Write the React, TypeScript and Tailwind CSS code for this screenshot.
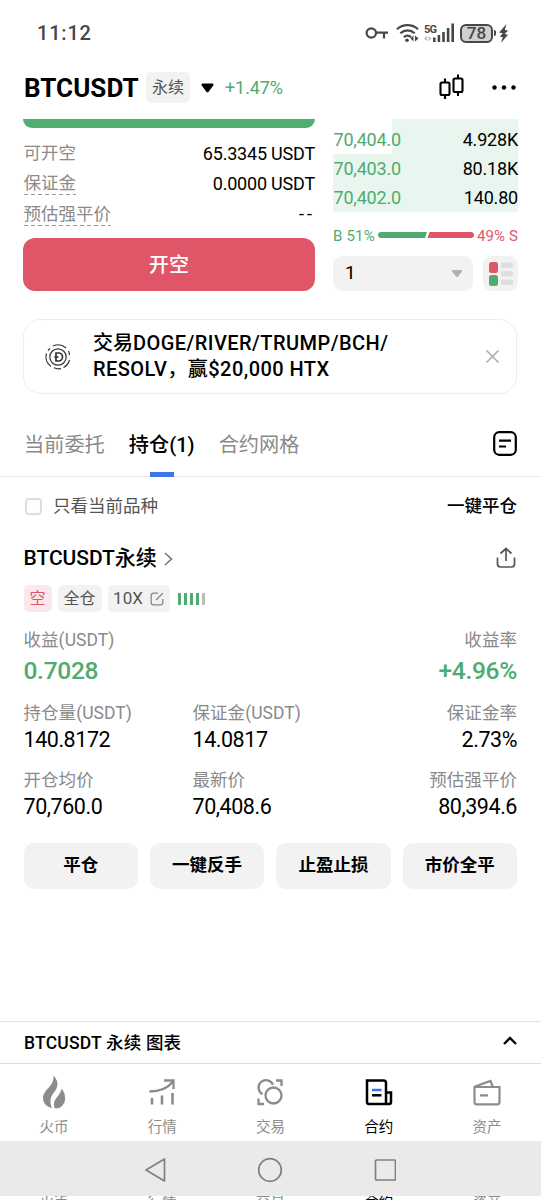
import type { ReactNode } from 'react'

const bids = [
  { price: '70,404.0', amount: '4.928K' },
  { price: '70,403.0', amount: '80.18K' },
  { price: '70,402.0', amount: '140.80' },
]

const actions = ['平仓', '一键反手', '止盈止损', '市价全平']

function StatusBar() {
  return (
    <div className="flex h-14 items-center justify-between pt-[10px] pr-[32px] pl-[37px] text-[#474747]">
      <span className="text-[20px] font-medium tracking-[0.8px]">11:12</span>
      <div className="flex items-center">
        <svg className="mr-[2px]" width="24" height="16" viewBox="0 0 24 16" fill="none" stroke="currentColor" strokeWidth="2.2">
          <circle cx="6.3" cy="8" r="4.7" />
          <path d="M11 7.6h12M19 8v5.4" />
        </svg>
        <svg className="ml-[5px]" width="24" height="20" viewBox="0 0 24 20" fill="none" stroke="currentColor" strokeWidth="2.2">
          <path d="M1 6.2c6-5.4 15-5.4 21 0" />
          <path d="M4.3 10.3c4.2-3.8 10.2-3.8 14.4 0" />
          <path d="M7.8 14.2c2.2-2 5-2 7.4 0" />
          <circle cx="11" cy="17.2" r="1.8" fill="currentColor" stroke="none" />
          <path d="M14.5 15.5l3-3v6zM19 12.5l3.5 3-3.5 3z" fill="currentColor" stroke="none" />
        </svg>
        <svg className="ml-[4px]" width="32" height="20" viewBox="0 0 32 20" fill="currentColor">
          <text x="0" y="9.5" fontSize="11" fontWeight="700" textLength="13">5G</text>
          <path d="M0 15.500l3-2.800v5.600zM4.500 12.700l3 2.800-3 2.800z" opacity=".35" />
          <path d="M9 14.500h2.600V19H9zM13.600 12h2.600v7h-2.600zM18.200 9h2.600v10h-2.600zM22.800 5h2.600v14h-2.600zM27.400.5H30V19h-2.600z" />
        </svg>
        <div className="ml-[4px] flex h-[19px] w-[33px] items-center justify-center rounded-[6px] border-2 border-[#474747] bg-[#d0d0d0] text-[17px] leading-[15px] font-medium">
          78
        </div>
        <div className="ml-[1px] h-[6px] w-[2px] rounded-r bg-[#474747]" />
        <svg className="ml-[3px]" width="10" height="19" viewBox="0 0 10 19" fill="currentColor">
          <path d="M7.500 0L0 8.500l3.800.8L.8 12.500l3 .7L2 19l7-8.200-3.400-.9L9 6.700 5.800 5.800z" />
        </svg>
      </div>
    </div>
  )
}

function Header() {
  return (
    <div className="flex h-[63px] items-center pr-[24px] pl-[24px]">
      <h1 className="w-[116px] pt-px text-[26px] font-bold tracking-[0.05px] whitespace-nowrap">BTCUSDT</h1>
      <span className="ml-[6px] flex h-[31px] w-[44px] items-center justify-center rounded-[5px] bg-[#f2f2f2] text-[16px] text-[#555]">
        永续
      </span>
      <svg className="ml-[11px]" width="13" height="10" viewBox="0 0 13 10">
        <path d="M1.800.5h9.400c1.400 0 1.800 1.300.9 2.300L7.600 8.700c-.6.8-1.600.8-2.200 0L.9 2.800C0 1.800.4.5 1.800.5z" />
      </svg>
      <span className="ml-[11px] text-[18px] tracking-[-0.1px] text-[#4fab6f]">+1.47%</span>
      <svg className="mb-[2px] ml-auto" width="26" height="26" viewBox="0 0 26 26" fill="none" stroke="black" strokeWidth="2.1">
        <rect x="1.500" y="8.500" width="9" height="12.500" rx="1.500" />
        <path d="M6 4.500v4M6 21v4M19 .5v4M19 18v4" />
        <rect x="14.500" y="4.500" width="9" height="13.500" rx="1.500" />
      </svg>
      <svg className="ml-[26px]" width="26" height="6" viewBox="0 0 26 6">
        <circle cx="3.500" cy="2.500" r="2.200" />
        <circle cx="13" cy="2.500" r="2.200" />
        <circle cx="22.500" cy="2.500" r="2.200" />
      </svg>
    </div>
  )
}

function InfoRow({ label, value, dashed }: { label: string; value: string; dashed?: boolean }) {
  return (
    <div className="flex h-[30.3px] items-center justify-between">
      <span className="relative text-[17.500px] leading-[24px] text-[#8a8a8a]">
        {label}
        {dashed && (
          <svg className="absolute bottom-0 left-0 h-px w-full">
            <line x1="0" y1="0.500" x2="100%" y2="0.500" stroke="#999" strokeDasharray="4 3" />
          </svg>
        )}
      </span>
      <span className={value === '--' ? 'text-[18px] tracking-[3px]' : 'text-[18px] tracking-[-0.2px]'}>{value}</span>
    </div>
  )
}

function OrderForm() {
  return (
    <div className="w-[292px]">
      <div className="h-[9px] overflow-hidden rounded-b-[12px] bg-[#51ad70]" />
      <div className="h-[110px] pt-[10px] pl-[0.5px]">
        <InfoRow label="可开空" value="65.3345 USDT" />
        <InfoRow label="保证金" value="0.0000 USDT" dashed />
        <InfoRow label="预估强平价" value="--" dashed />
      </div>
      <button className="flex h-[53px] w-full items-center justify-center rounded-[12px] bg-[#df5668] text-[20px] font-medium text-white">
        开空
      </button>
    </div>
  )
}

function OrderBook() {
  return (
    <div className="w-[185px]">
      <div className="relative h-[93px] bg-[#e9f6ef] pt-[6px]">
        {/* first level is only partly filled */}
        <div className="absolute top-0 left-0 h-[35px] w-[59px] bg-white" />
        {bids.map((row) => (
          <div key={row.price} className="relative flex h-[29.2px] items-center justify-between text-[18px] tracking-[-0.2px]">
            <span className="pl-[0.5px] text-[#4fab6f]">{row.price}</span>
            <span>{row.amount}</span>
          </div>
        ))}
      </div>
      <div className="mt-[13px] flex h-[22px] items-center justify-between text-[15px] whitespace-nowrap">
        <span className="tracking-[0.2px] text-[#4fab6f]">B 51%</span>
        <svg className="mb-[2px]" width="96" height="6" viewBox="0 0 96 6">
          <path d="M3 0h46l-2 6H3a3 3 0 0 1 0-6z" fill="#4fab6f" />
          <path d="M51.500 0H93a3 3 0 0 1 0 6H49.500z" fill="#df5668" />
        </svg>
        <span className="tracking-[0.1px] text-[#df5668]">49% S</span>
      </div>
      <div className="mt-[9px] flex justify-between">
        <div className="flex h-[35px] w-[140px] items-center justify-between rounded-[9px] bg-[#f2f2f2] pr-[11px] pl-[12px] text-[19px]">
          <span>1</span>
          <svg width="10" height="7" viewBox="0 0 10 7" fill="#b0b0b0">
            <path d="M1.200 0h7.600c1.200 0 1.500 1 .8 1.900L5.900 6.400c-.5.700-1.300.700-1.800 0L.4 1.900C-.3 1 0 0 1.200 0z" />
          </svg>
        </div>
        <div className="flex h-[35px] w-[35px] items-center justify-center rounded-[9px] bg-[#f2f2f2]">
          <svg width="24" height="24" viewBox="0 0 24 24">
            <rect width="9" height="11" rx="2.500" fill="#df5668" />
            <rect y="13" width="9" height="11" rx="2.500" fill="#4fab6f" />
            <g fill="#dedede">
              <rect x="12" y=".5" width="12" height="5.500" rx="1.500" />
              <rect x="12" y="9" width="12" height="5.500" rx="1.500" />
              <rect x="12" y="17.500" width="12" height="5.500" rx="1.500" />
            </g>
          </svg>
        </div>
      </div>
    </div>
  )
}

function Banner() {
  return (
    <div className="mr-[24px] ml-[23px] mt-[28px] flex h-[75px] items-center rounded-[18px] border border-[#ededed] pr-[17px] pl-[21px]">
      <svg width="26" height="26" viewBox="0 0 26 26" fill="none" stroke="#333" strokeWidth="1.200">
        <circle cx="13" cy="13" r="8.200" />
        <path d="M8 2a12 12 0 0 1 13 2M23.500 7a12 12 0 0 1 1 4M24.500 16a12 12 0 0 1-6 7.500M16 24.600a12 12 0 0 1-7-.8M6 22.500a12 12 0 0 1-4.500-13M3 6.500L5 4.300" />
        <path d="M11 9h2.500a4 4 0 0 1 0 8H11zM9.300 13h4.200" strokeWidth="1.700" />
      </svg>
      <p className="ml-[22px] w-[340px] text-[20px] leading-[25.500px] font-medium tracking-[0.45px] whitespace-nowrap">
        <span className="tracking-normal">交易</span>DOGE/RIVER/TRUMP/BCH/
        <br />
        RESOLV，赢$20,000 HTX
      </p>
      <svg className="ml-auto" width="13" height="13" viewBox="0 0 13 13" stroke="#aaa" strokeWidth="1.500">
        <path d="M.5.5l12 12M12.500.5l-12 12" />
      </svg>
    </div>
  )
}

function Tabs() {
  return (
    <div className="mt-[29px] flex h-[54px] justify-between border-b border-[#ececec] px-[24px] text-[20.200px] text-[#8a8a8a]">
      <div className="flex gap-[24px]">
        <span className="pt-[7px]">当前委托</span>
        <span className="relative pt-[7px] font-medium text-black">
          持仓(1)
          <i className="absolute -bottom-px left-1/2 h-[5px] w-[24px] -translate-x-1/2 bg-[#3b78ec]" />
        </span>
        <span className="pt-[7px]">合约网格</span>
      </div>
      <svg className="mt-[8px]" width="24" height="25" viewBox="0 0 24 25" fill="none" stroke="black" strokeWidth="2.200">
        <rect x="1.200" y="1.200" width="21.600" height="22.600" rx="5" />
        <path d="M6 9.700h12M6 15.500h7" />
      </svg>
    </div>
  )
}

function Stat({ label, value, right, green }: { label: string; value: string; right?: boolean; green?: boolean }) {
  return (
    <div className={right ? 'text-right' : ''}>
      <div className="text-[17.500px] leading-[26px] tracking-[0.05px] whitespace-nowrap text-[#8a8a8a]">{label}</div>
      {green ? (
        <div className="pt-px text-[24.500px] leading-[33px] font-medium tracking-[-0.3px] text-[#4fab6f]">{value}</div>
      ) : (
        <div className="text-[21.500px] leading-[28px] tracking-[-0.45px]">{value}</div>
      )}
    </div>
  )
}

function Position() {
  return (
    <div className="pr-[24px] pl-[23.500px]">
      <div className="flex h-[59px] items-center">
        <div className="ml-[1.500px] h-[17px] w-[17px] rounded-[4px] border-2 border-[#dedede]" />
        <span className="ml-[11px] text-[17.500px] text-[#555]">只看当前品种</span>
        <span className="ml-auto text-[17.500px] font-medium">一键平仓</span>
      </div>
      <div className="flex h-[46px] items-center">
        <span className="text-[21px] font-medium tracking-[-0.05px]">BTCUSDT永续</span>
        <svg className="ml-[7px]" width="9" height="14" viewBox="0 0 9 14" fill="none" stroke="#777" strokeWidth="1.600">
          <path d="M1 1l6.500 6L1 13" />
        </svg>
        <svg className="mb-[3px] mr-[1px] ml-auto" width="20" height="21" viewBox="0 0 20 21" fill="none" stroke="#555" strokeWidth="1.700">
          <path d="M1.500 10.500v6.500c0 2 1 3 3 3h11c2 0 3-1 3-3v-6.500M10 14V2M4.500 6.500L10 1.500l5.500 5" />
        </svg>
      </div>
      <div className="mt-[3px] flex h-[27px] gap-[6px] text-[16px] text-[#555]">
        <span className="flex w-[28px] items-center justify-center rounded-[5px] bg-[#fce8ec] text-[#df5668]">空</span>
        <span className="flex w-[44px] items-center justify-center rounded-[5px] bg-[#f2f2f2]">全仓</span>
        <span className="flex w-[62px] items-center justify-center gap-[7px] rounded-[5px] bg-[#f2f2f2] text-[17px]">
          10X
          <svg width="14" height="14" viewBox="0 0 14 14" fill="none" stroke="#888" strokeWidth="1.300">
            <path d="M8 1.200H3.500c-1.500 0-2.300.8-2.300 2.300v7c0 1.500.8 2.300 2.300 2.300h7c1.500 0 2.300-.8 2.300-2.300V7M6 8l6.800-6.800" />
          </svg>
        </span>
        <div className="ml-[2px] flex items-center gap-[3px]">
          {[0, 1, 2, 3].map((i) => (
            <i key={i} className="h-[12px] w-[3px] bg-[#4fab6f]" />
          ))}
          <i className="h-[12px] w-[3px] bg-[#bbb]" />
        </div>
      </div>
      <div className="mt-[15px] flex h-[73px] justify-between">
        <Stat label="收益(USDT)" value="0.7028" green />
        <Stat label="收益率" value="+4.96%" green right />
      </div>
      <div className="grid grid-cols-[169px_169px_1fr] gap-y-[13px]">
        <Stat label="持仓量(USDT)" value="140.8172" />
        <Stat label="保证金(USDT)" value="14.0817" />
        <Stat label="保证金率" value="2.73%" right />
        <Stat label="开仓均价" value="70,760.0" />
        <Stat label="最新价" value="70,408.6" />
        <Stat label="预估强平价" value="80,394.6" right />
      </div>
      <div className="mt-[22px] grid grid-cols-4 gap-[12px]">
        {actions.map((name) => (
          <button key={name} className="h-[46px] rounded-[10px] bg-[#f2f2f2] pb-px text-[17.500px] font-bold">
            {name}
          </button>
        ))}
      </div>
    </div>
  )
}

function FlameIcon() {
  return (
    <svg width="24" height="34" viewBox="0 0 24 34" fill="#8c8c8c">
      <path d="M11.500.5c4.500 5 5 9.500 2.500 14-2.500 4-5.500 6.500-5.500 11.500 0 3 .5 5 1.500 7C4.500 32 1 28 1 23 1 14.500 12.500 11.500 11.500.5z" />
      <path d="M19.500 13.500c5 6 5.500 15.500-2.500 19.500-1.500.5-3 .5-4.500 0-3-9 6-11.500 7-19.500z" />
    </svg>
  )
}

function MarketIcon() {
  return (
    <svg width="28" height="28" viewBox="0 0 28 28" fill="none" stroke="#8c8c8c" strokeWidth="2.300">
      <path d="M1.500 13.500C12 13.500 19 11 24.500 4M16 2.500h9.500V11" />
      <path d="M4 20v6.500M14 17.500v9M24.500 15v11.500" strokeWidth="2.600" />
    </svg>
  )
}

function TradeIcon() {
  return (
    <svg width="28" height="28" viewBox="0 0 28 28" fill="none" stroke="#8c8c8c" strokeWidth="2.300">
      <path d="M6.500 16.200A7.500 7.500 0 1 1 17 6.800" />
      <circle cx="17.500" cy="17.500" r="8" />
      <path d="M20 2.500h5.500V8M2.500 20.500V26H8" />
    </svg>
  )
}

function FuturesIcon() {
  return (
    <svg width="28" height="28" viewBox="0 0 28 28" fill="none" stroke="black" strokeWidth="2.500">
      <path d="M2 2.500h16.500c1.500 0 2.500 1 2.500 2.500v21H4c-1.200 0-2-.8-2-2zM21 14.500h5V24c0 1.200-.8 2-2 2h-6" />
      <path d="M7 12h9.500" stroke="#3b6fe8" />
      <path d="M7 17.300h9.500" />
    </svg>
  )
}

function AssetsIcon() {
  return (
    <svg width="28" height="28" viewBox="0 0 28 28" fill="none" stroke="#8c8c8c" strokeWidth="2.200">
      <path d="M1.500 9h25v15c0 1.500-.7 2.300-2.300 2.300H3.800c-1.600 0-2.300-.8-2.300-2.300zM2 8.500l15.500-5.500L20 9M7 17.300h8" />
    </svg>
  )
}

const navItems: { label: string; icon: ReactNode; active?: boolean }[] = [
  { label: '火币', icon: <FlameIcon /> },
  { label: '行情', icon: <MarketIcon /> },
  { label: '交易', icon: <TradeIcon /> },
  { label: '合约', icon: <FuturesIcon />, active: true },
  { label: '资产', icon: <AssetsIcon /> },
]

function BottomNav() {
  return (
    <div className="grid h-[77px] grid-cols-5">
      {navItems.map((item) => (
        <div key={item.label} className="flex flex-col items-center">
          <div className="flex h-[54px] items-center pt-px">{item.icon}</div>
          <span className={item.active ? 'text-[14.500px] leading-[20px]' : 'text-[14.500px] leading-[20px] text-[#8c8c8c]'}>
            {item.label}
          </span>
        </div>
      ))}
    </div>
  )
}

function SystemNav() {
  return (
    <div className="flex h-[55px] items-center bg-[#eaeaea] pt-[3px] pl-[144px]">
      <svg width="252" height="26" viewBox="0 0 252 26" fill="none" stroke="#808080" strokeWidth="1.700" strokeLinejoin="round">
        <path d="M20.500 2v22L2 13z" />
        <circle cx="126" cy="13" r="11.300" />
        <rect x="231.500" y="3" width="20" height="20" rx="1" />
      </svg>
    </div>
  )
}

export default function App() {
  return (
    <div className="flex h-[1200px] w-[541px] flex-col overflow-hidden bg-white font-[Roboto,'Noto_Sans_CJK_SC',sans-serif] text-black">
      <StatusBar />
      <Header />
      <div className="flex justify-between pr-[23px] pl-[23px]">
        <OrderForm />
        <OrderBook />
      </div>
      <Banner />
      <Tabs />
      <Position />
      <div className="mt-auto flex h-[42px] shrink-0 items-center justify-between border-t border-[#e2e2e2] px-[24px]">
        <span className="pt-[2px] text-[17.500px] font-medium tracking-[0.2px]">BTCUSDT 永续 图表</span>
        <svg className="mb-[4px]" width="14" height="9" viewBox="0 0 14 9" fill="none" stroke="black" strokeWidth="2.300">
          <path d="M1 8l6-6 6 6" />
        </svg>
      </div>
      <div className="border-t border-[#dedede]">
        <BottomNav />
      </div>
      <SystemNav />
      {/* tops of the labels peek out below the system bar */}
      <div className="grid h-[4px] shrink-0 grid-cols-5 overflow-hidden text-center text-[14.500px] leading-[20px] text-[#8c8c8c]">
        {navItems.map((item) => (
          <span key={item.label} className={item.active ? '-mt-[3px] text-black' : '-mt-[3px]'}>
            {item.label}
          </span>
        ))}
      </div>
    </div>
  )
}
